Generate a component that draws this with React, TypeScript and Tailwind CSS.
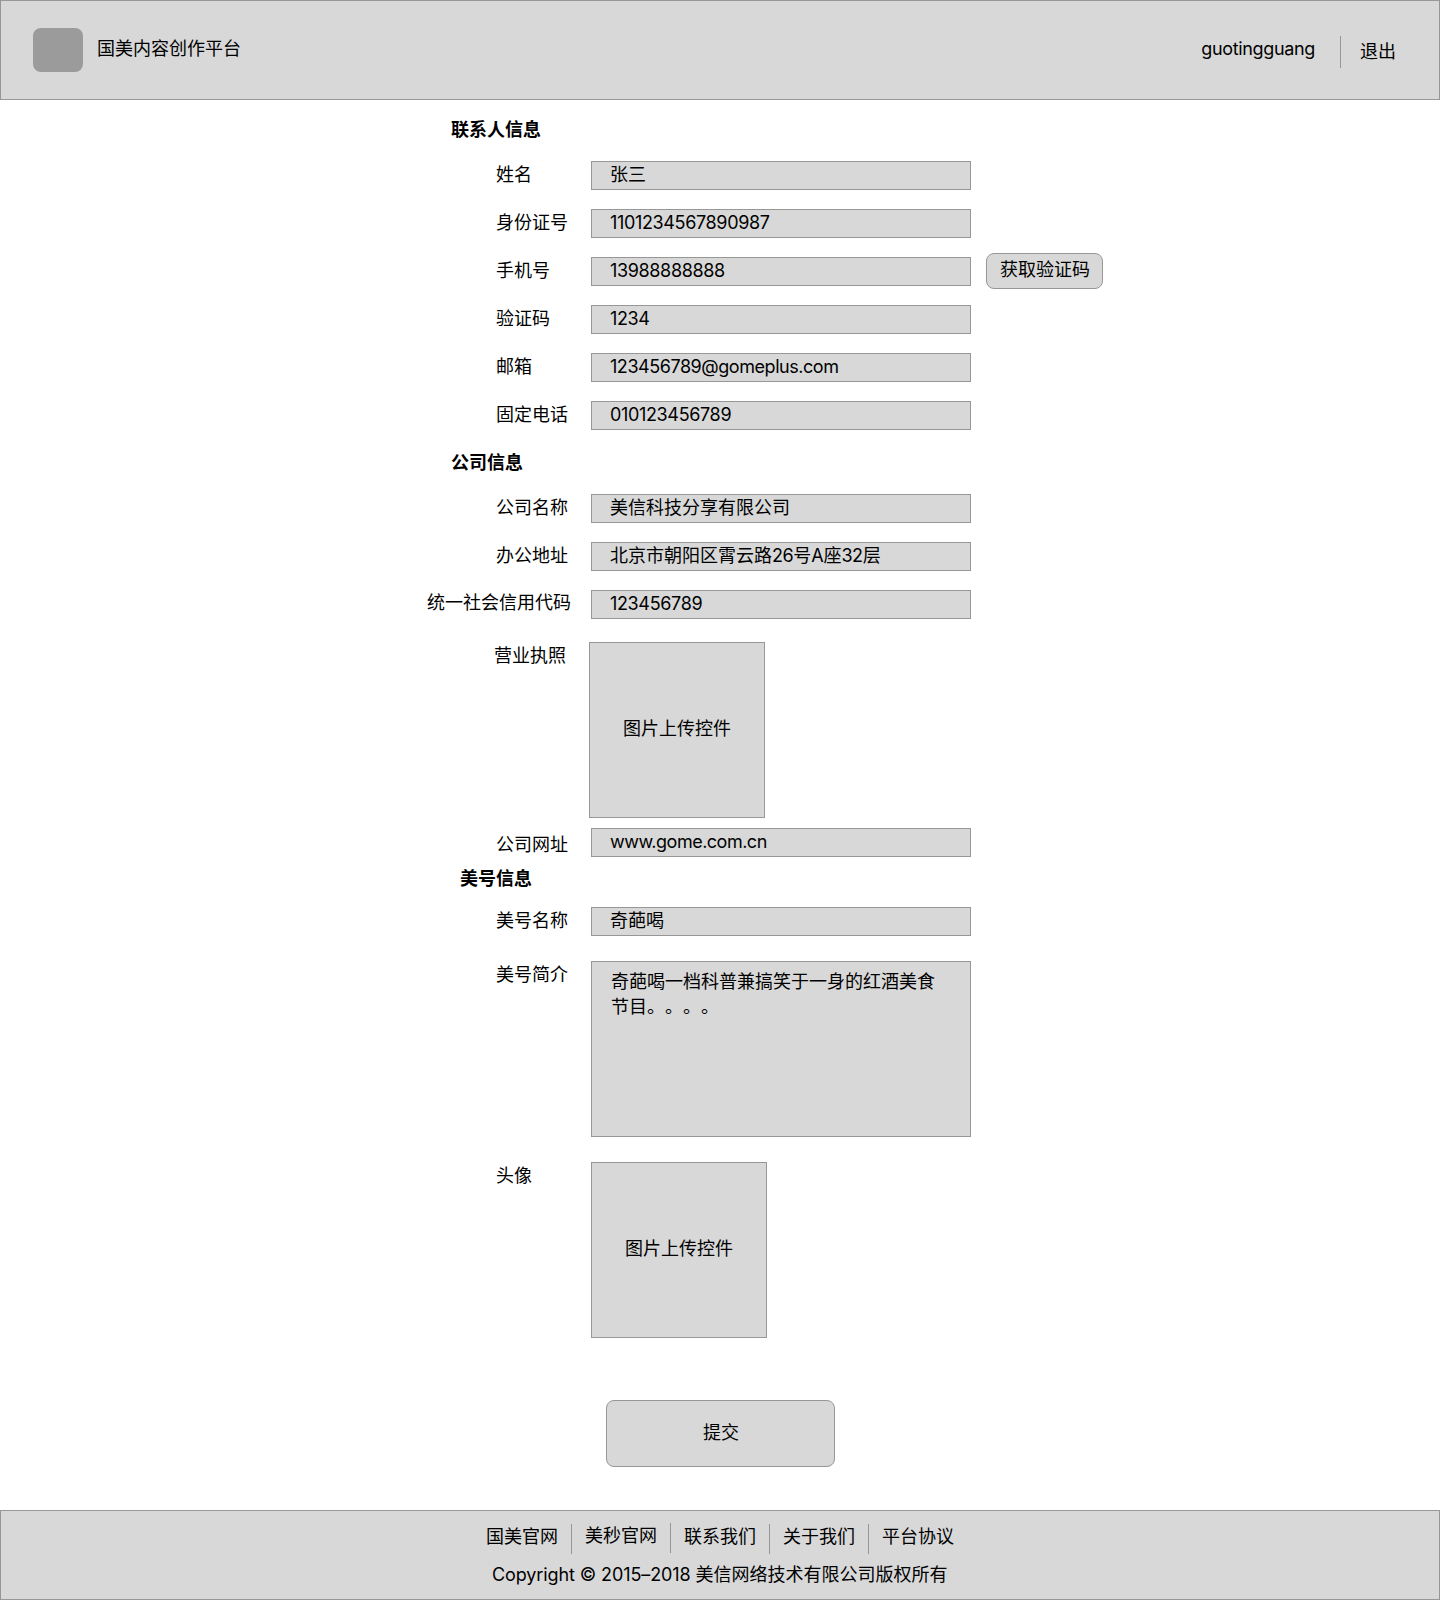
import type { ReactNode } from "react";

const box = "border border-[#979797] bg-[#d8d8d8]";

function SectionTitle({ children, className = "" }: { children: ReactNode; className?: string }) {
  return <h2 className={`h-[25px] font-semibold ${className}`}>{children}</h2>;
}

function Row({
  label,
  labelClass = "pl-[69px] pt-px",
  className = "h-[29px]",
  children,
}: {
  label: string;
  labelClass?: string;
  className?: string;
  children: ReactNode;
}) {
  return (
    <div className={`flex items-start ${className}`}>
      <div className={`w-[164px] shrink-0 whitespace-nowrap ${labelClass}`}>{label}</div>
      {children}
    </div>
  );
}

function Field({ children, className = "" }: { children: ReactNode; className?: string }) {
  return <div className={`h-[29px] w-[380px] shrink-0 whitespace-nowrap pl-[18px] ${box} ${className}`}>{children}</div>;
}

function Latin({ children }: { children: ReactNode }) {
  return <span className="tracking-[-0.4px]">{children}</span>;
}

function Upload({ className = "" }: { className?: string }) {
  return (
    <div className={`flex size-[176px] shrink-0 items-center justify-center pb-[3px] ${box} ${className}`}>
      图片上传控件
    </div>
  );
}

const links = ["国美官网", "美秒官网", "联系我们", "关于我们", "平台协议"];

export default function App() {
  return (
    <div className="flex h-[1600px] w-[1440px] flex-col bg-white font-['Inter','Noto_Sans_CJK_SC',sans-serif] text-[18px] leading-[25px] text-black">
      <header className={`flex h-[100px] shrink-0 items-start pl-8 ${box}`}>
        <div className="mt-[27px] h-11 w-[50px] rounded-lg bg-[#9b9b9b]" />
        <div className="ml-[14px] mt-[35px]">国美内容创作平台</div>
        <div className="ml-auto mt-[35px] tracking-[-0.35px]">guotingguang</div>
        <div className="ml-[25px] mt-[35px] h-8 w-px bg-[#979797]" />
        <div className="ml-[19px] mr-[43px] mt-[38px]">退出</div>
      </header>

      <main className="flex flex-col pl-[427px]">
        <SectionTitle className="mt-[17px] pl-6">联系人信息</SectionTitle>
        <div className="mt-[19px] flex flex-col gap-[19px]">
          <Row label="姓名"><Field>张三</Field></Row>
          <Row label="身份证号"><Field className="tracking-[-0.35px]">1101234567890987</Field></Row>
          <Row label="手机号">
            <Field className="tracking-[-0.35px]">13988888888</Field>
            <button className={`-mt-1 ml-[15px] h-9 w-[117px] shrink-0 rounded-lg pb-[3px] pl-px ${box}`}>获取验证码</button>
          </Row>
          <Row label="验证码"><Field className="tracking-[-0.35px]">1234</Field></Row>
          <Row label="邮箱"><Field className="tracking-[-0.45px]">123456789@gomeplus.com</Field></Row>
          <Row label="固定电话"><Field className="tracking-[-0.35px]">010123456789</Field></Row>
        </div>

        <SectionTitle className="mt-5 pl-6">公司信息</SectionTitle>
        <div className="mt-[19px] flex flex-col gap-[19px]">
          <Row label="公司名称"><Field>美信科技分享有限公司</Field></Row>
          <Row label="办公地址">
            <Field>北京市朝阳区霄云路<Latin>26</Latin>号<Latin>A</Latin>座<Latin>32</Latin>层</Field>
          </Row>
          <Row label="统一社会信用代码" labelClass=""><Field className="tracking-[-0.35px]">123456789</Field></Row>
        </div>
        <Row label="营业执照" labelClass="pl-[67px] pt-px" className="mt-[23px] h-[176px]">
          <Upload className="-ml-0.5" />
        </Row>
        <Row label="公司网址" labelClass="pl-[69px] pt-1" className="mt-2.5 h-[29px]">
          <Field className="tracking-[-0.5px]">www.gome.com.cn</Field>
        </Row>

        <SectionTitle className="mt-[9px] pl-[33px]">美号信息</SectionTitle>
        <Row label="美号名称" className="mt-4 h-[29px]"><Field>奇葩喝</Field></Row>
        <Row label="美号简介" className="mt-[25px] h-[176px]">
          <div className={`h-[176px] w-[380px] pl-[19px] pr-[30px] pt-[7px] [text-spacing-trim:space-all] ${box}`}>
            奇葩喝一档科普兼搞笑于一身的红酒美食节目。。。。
          </div>
        </Row>
        <Row label="头像" className="mt-[25px] h-[176px]"><Upload /></Row>

        <button className={`ml-[179px] mt-[62px] h-[67px] w-[229px] rounded-lg pb-[2px] pl-px ${box}`}>提交</button>
      </main>

      <footer className={`mt-auto flex h-[90px] shrink-0 flex-col ${box}`}>
        <nav className="ml-[485px] mt-[13px] flex h-[30px]">
          {links.map((link, i) => (
            <div key={link} className={`flex w-[99px] shrink-0 ${i === 1 ? "-mt-px mb-px" : ""}`}>
              <a className="w-[85px] whitespace-nowrap">{link}</a>
              {i < links.length - 1 && <span className="h-[30px] w-px bg-[#979797]" />}
            </div>
          ))}
        </nav>
        <p className="ml-[491px] mt-2">
          <span className="tracking-[-0.1px]">Copyright © 2015–2018 </span>美信网络技术有限公司版权所有
        </p>
      </footer>
    </div>
  );
}
